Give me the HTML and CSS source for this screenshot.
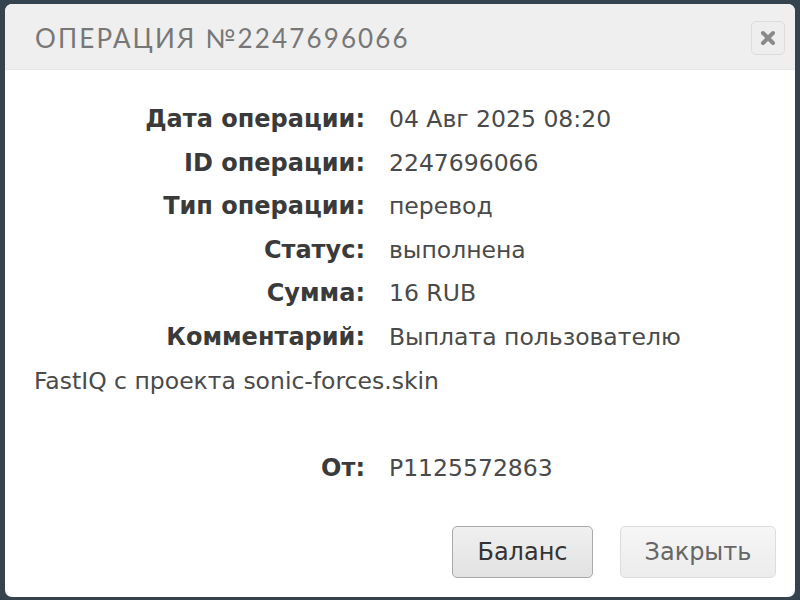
FILE: index.html
```html
<!DOCTYPE html>
<html lang="ru">
<head>
<meta charset="utf-8">
<title>Операция</title>
<link rel="stylesheet" href="styles.css">
</head>
<body>
<div class="dialog">
  <div class="titlebar">
    <span class="title">ОПЕРАЦИЯ №2247696066</span>
    <button class="close" aria-label="Закрыть">
      <svg width="16" height="16" viewBox="0 0 16 16"><path d="M3 3 L13 13 M13 3 L3 13" stroke="#8a8a8a" stroke-width="4" stroke-linecap="round"/></svg>
    </button>
  </div>
  <div class="content">
    <div class="row"><span class="label">Дата операции:</span><span class="value">04 Авг 2025 08:20</span></div>
    <div class="row"><span class="label">ID операции:</span><span class="value">2247696066</span></div>
    <div class="row"><span class="label">Тип операции:</span><span class="value">перевод</span></div>
    <div class="row"><span class="label">Статус:</span><span class="value">выполнена</span></div>
    <div class="row"><span class="label">Сумма:</span><span class="value">16 RUB</span></div>
    <div class="row"><span class="label">Комментарий:</span><span class="value">Выплата пользователю FastIQ с проекта sonic-forces.skin</span></div>
    <div class="row empty">&nbsp;</div>
    <div class="row"><span class="label">От:</span><span class="value">P1125572863</span></div>
  </div>
  <div class="footer">
    <button class="btn primary">Баланс</button>
    <button class="btn secondary">Закрыть</button>
  </div>
</div>
</body>
</html>
```
FILE: styles.css
```css
html, body {
  margin: 0;
  padding: 0;
  background: #34434d;
  width: 800px;
  height: 600px;
  overflow: hidden;
}
.dialog {
  margin: 4px 5px 3px 5px;
  height: 593px;
  background: #ffffff;
  border-radius: 7px;
  display: flex;
  flex-direction: column;
  overflow: hidden;
}
.titlebar {
  height: 66px;
  flex: 0 0 66px;
  background: #efefef;
  border-bottom: 1px solid #e6e6e6;
  box-sizing: border-box;
  display: flex;
  align-items: center;
  justify-content: space-between;
  padding: 0 10px 0 30px;
}
.title {
  font-family: "Lato", "DejaVu Sans", sans-serif;
  font-size: 26px;
  letter-spacing: 2.15px;
  color: #777777;
  font-weight: 400;
  margin-top: 2px;
}
.close {
  width: 34px;
  height: 34px;
  border: 1px solid #dcdcdc;
  border-radius: 5px;
  background: #eeeeee;
  display: flex;
  align-items: center;
  justify-content: center;
  padding: 0;
  margin-top: 3px;
}
.content {
  flex: 1;
  padding: 28px 40px 0 29px;
  font-size: 23px;
  line-height: 43.6px;
  color: #444444;
}
.row {
  font-family: "DejaVu Sans", sans-serif;
}
.label {
  display: inline-block;
  width: 331px;
  text-align: right;
  font-family: "DejaVu Sans", sans-serif;
  font-weight: bold;
  color: #3a3a3a;
  margin-right: 24px;
  font-size: 24px;
}
.value {
  font-family: "DejaVu Sans", sans-serif;
  font-size: 23.5px;
  color: #4a4a4a;
}
.footer {
  display: flex;
  justify-content: flex-end;
  gap: 27px;
  padding: 0 19px 19px 0;
}
.btn {
  height: 52px;
  border-radius: 5px;
  font-family: "DejaVu Sans", sans-serif;
  font-size: 24px;
  padding: 0;
}
.primary {
  width: 141px;
  border: 1px solid #a9a9a9;
  background: linear-gradient(#f0f0f0, #e2e2e2);
  color: #333333;
}
.secondary {
  width: 156px;
  border: 1px solid #dddddd;
  background: linear-gradient(#f6f6f6, #ececec);
  color: #666666;
}
```
